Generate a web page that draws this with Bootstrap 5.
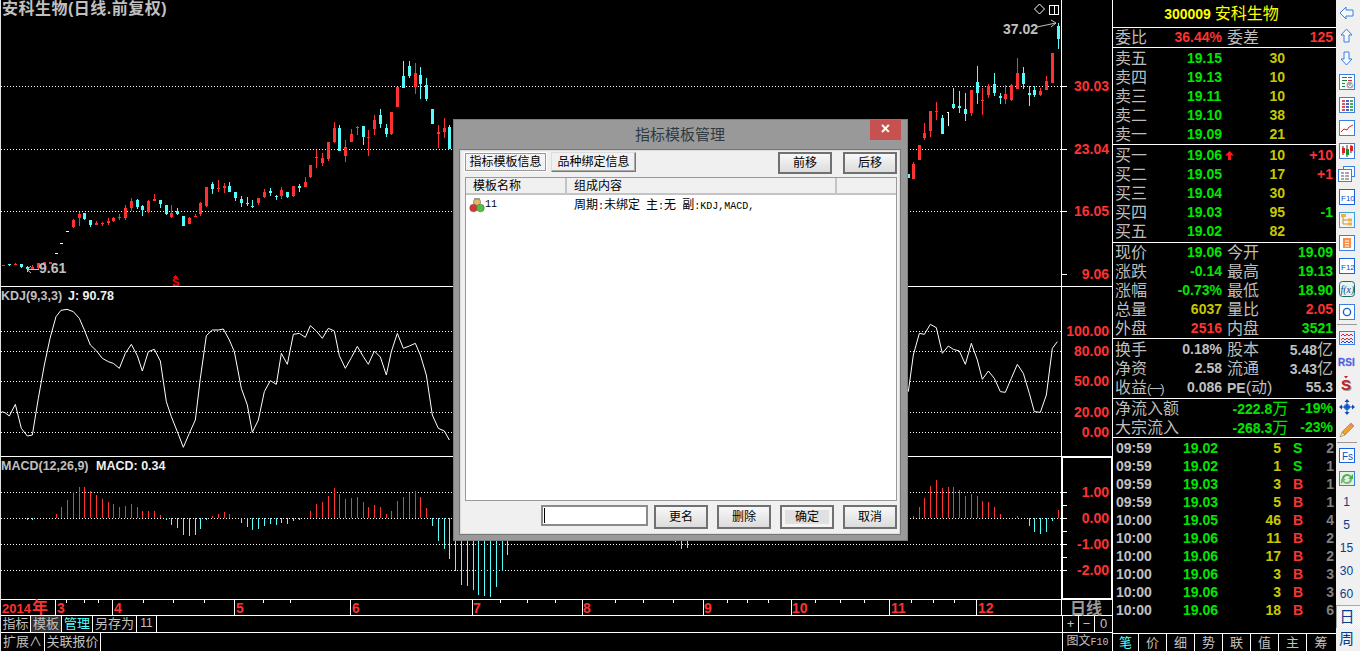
<!DOCTYPE html>
<html lang="zh">

<head>
  <meta charset="UTF-8">
  <meta name="viewport" content="width=device-width, initial-scale=1">
  <title>安科生物 日线</title>
  <link href="https://cdn.jsdelivr.net/npm/bootstrap@5.3.3/dist/css/bootstrap.min.css" rel="stylesheet">

  <style>
    body {
      background-color: #000;
      color: #c0c0c0;
      font-family: "Liberation Sans", "Noto Sans CJK SC", sans-serif;
      font-size: 14px;
      margin: 0;
      overflow: hidden;
    }
    .app-shell { width: 1360px; height: 651px; position: relative; overflow: hidden; }

    /* left chart column */
    .chart-col { width: 1113px; height: 651px; border-left: 1px solid #e0e0e0; border-right: 1px solid #fff; flex: none; }
    .chart-svg { display: block; width: 1111px; height: 616px; }
    .chart-svg text { font-family: "Liberation Sans", "Noto Sans CJK SC", sans-serif; }
    .btm-bar { border-bottom: 1px solid #fff; height: 17px; line-height: 15px; font-size: 13px; white-space: nowrap; }
    .btm-bar.last-bar { border-bottom: 0; height: 18px; line-height: 17px; }
    .btm-cell { border-right: 1px solid #fff; text-align: center; flex: none; height: 100%; }
    .bc-30 { width: 30px; }
    .bc-31 { width: 31px; }
    .bc-44 { width: 44px; }
    .bc-20 { width: 20px; font-size: 12px; }
    .bc-56 { width: 56px; }
    .bc-16 { width: 16px; font-size: 13px; }
    .bc-last { width: 17px; font-size: 13px; border-right: 0; }
    .axis-cells { margin-left: auto; width: 50px; border-left: 1px solid #fff; height: 100%; flex: none; }
    .btm-active { color: #54ffff; }
    .btm-grey { background-color: #333; }
    .f10-label { font-size: 12px; width: 50px; text-align: center; }
    .mono-part { font-family: "Liberation Mono", monospace; font-size: 10px; }

    /* quote panel */
    .quote-col { width: 223px; height: 651px; flex: none; overflow: hidden; }
    .q-head { height: 27px; line-height: 27px; padding-right: 6px; color: #ffff00; font-weight: 700; text-align: center; border-bottom: 1px solid #fff; box-sizing: content-box; }
    .q-head span { font-size: 16px; font-weight: 400; }
    .q-block { border-bottom: 1px solid #fff; box-sizing: content-box; }
    .book-sell { padding-top: 1px; }
    .book-buy { padding: 1px 0; }
    .block-extra { padding-top: 1px; padding-bottom: 1px; }
    .q-line { height: 19px; line-height: 19px; padding-left: 2px; padding-right: 3px; font-weight: 700; white-space: nowrap; display: flex; }
    .q-lab { font-size: 16px; font-weight: 400; color: #bdbdbd; flex: none; }
    .q-tiny { font-size: 13px; letter-spacing: -2px; }
    .q-pe { font-size: 14px; font-weight: 700; }
    .q-price { width: 50px; margin-left: 40px; flex: none; position: relative; }
    .q-vol { width: 48px; text-align: right; flex: none; }
    .q-diff { flex: 1; text-align: right; }
    .half-a { width: 107px; display: flex; justify-content: space-between; flex: none; }
    .half-b { flex: 1; margin-left: 5px; display: flex; justify-content: space-between; }
    .up-arrow { position: absolute; left: 38px; top: 5px; }
    .c-green { color: #00e600; }
    .c-red { color: #ff3232; }
    .c-vol { color: #c8c800; }
    .tick-line { height: 18px; line-height: 18px; padding-left: 3px; font-weight: 700; display: flex; white-space: nowrap; }
    .tk-time { width: 67px; flex: none; }
    .tk-price { width: 50px; flex: none; color: #00e600; }
    .tk-vol { width: 48px; text-align: right; color: #c8c800; flex: none; }
    .tk-side { width: 12px; margin-left: 12px; flex: none; }
    .tk-num { flex: 1; text-align: right; padding-right: 2px; color: #808080; }
    .tick-list { height: 194px; padding-top: 1px; border-bottom: 1px solid #fff; box-sizing: content-box; }
    .tab-cell { width: 28px; height: 18px; line-height: 17px; font-size: 13px; text-align: center; border-right: 1px solid #fff; flex: none; }
    .tab-cell.first-tab { width: 26px; color: #54ffff; }
    .tab-cell:last-child { border-right: 0; }

    /* right toolbar */
    .tool-col { width: 24px; height: 651px; background-color: #f0f0f0; flex: none; overflow: hidden; padding-top: 1px; }
    .tool-btn { height: 23px; display: flex; align-items: center; justify-content: center; color: #0a3c8c; font-size: 12px; flex: none; padding-right: 3px; }
    .tool-btn text { font-family: "Liberation Sans", sans-serif; }
    .tool-sep { height: 8px; display: flex; align-items: center; }
    .tool-sep::after { content: ""; display: block; width: 20px; margin-left: 1px; border-top: 1px solid #999; }
    .tool-pressed { background: repeating-conic-gradient(#fff 0 25%, #ececec 0 50%) 0 0 / 2px 2px; border-top: 1px solid #aaa; border-left: 1px solid #aaa; font-size: 15px; }
    .tool-wide { font-size: 15px; }
    .serif-text { font-family: "Liberation Serif", serif !important; }

    /* dialog */
    .tpl-dialog { position: absolute; left: 453px; top: 119px; width: 455px; height: 422px; background-color: #999; border: 1px solid #7d7d7d; padding: 0 6px 6px 5px; font-size: 12px; color: #000; }
    .dlg-title { height: 29px; position: relative; text-align: center; line-height: 29px; font-size: 15px; color: #2f3a40; }
    .dlg-close { position: absolute; right: 0; top: 0; width: 31px; height: 20px; background-color: #c75050; color: #fff; line-height: 18px; font-size: 16px; font-weight: 700; }
    .dlg-body { height: 386px; background-color: #f0f0f0; border: 1px solid #777; outline: 1px solid #ddd; outline-offset: -2px; padding: 2px 3px 0 5px; }
    .tab-btn { height: 20px; line-height: 16px; padding: 0; font-size: 12px; border-radius: 0; color: #000; background-color: #f0f0f0; }
    .tab-on { width: 83px; margin-left: -1px; border: 1px solid #fff; outline: 1px solid #999; outline-offset: -2px; background: repeating-conic-gradient(#fff 0 25%, #e8e8e8 0 50%) 0 0 / 2px 2px; }
    .tab-off { width: 85px; border: 1px solid #777; border-top-color: #ddd; border-left-color: #ddd; box-shadow: inset -1px -1px 0 #aaa; }
    .dlg-btn { width: 54px; height: 22px; line-height: 16px; padding: 0; font-size: 12px; border-radius: 0; color: #000; border: 2px solid #707070; background: linear-gradient(#f8f8f8, #dcdcdc); }
    .dlg-btn.tall-btn { height: 24px; }
    .dlg-btn.is-default { background: #e0e0e0; box-shadow: inset 0 0 0 3px #f4f4f4; }
    .dlg-btn:hover { background: linear-gradient(#f8f8f8, #dcdcdc); color: #000; border-color: #707070; }
    .gap-in { margin-left: 6px; }
    .gap-btn { margin-left: 9px; }
    .gap-top { margin-left: 11px; }
    .tpl-list { height: 324px; background-color: #fff; border: 1px solid #999; margin-top: 3px; }
    .tpl-head { height: 15px; line-height: 17px; background-color: #f0f0f0; border-bottom: 2px solid #c4c4c4; box-sizing: content-box; margin: 0; }
    .tpl-head > div { border-right: 2px solid #c4c4c4; padding-left: 7px; flex: none; height: 15px; }
    .th-name { width: 101px; }
    .th-parts { width: 270px; }
    .tpl-item { height: 18px; line-height: 18px; margin-top: 1px; }
    .item-name { width: 101px; flex: none; font-size: 10px; padding-left: 3px; font-family: "Liberation Mono", monospace; }
    .item-parts { padding-left: 7px; white-space: nowrap; }
    .dlg-input { width: 107px; height: 21px; border: 2px solid #8a8a8a; background-color: #fff; position: relative; }
    .dlg-input::after { content: ""; position: absolute; left: 1px; top: 1px; height: 15px; border-left: 1px solid #000; }
  </style>
</head>

<body>

<div class="app-shell d-flex">

  <!-- K线区 -->
  <div class="chart-col">
    <svg class="chart-svg" id="chart" viewBox="1 0 1111 616" shape-rendering="crispEdges"></svg>
    <div class="btm-bar d-flex">
      <div class="btm-cell bc-30">指标</div>
      <div class="btm-cell bc-31 btm-grey">模板</div>
      <div class="btm-cell bc-31 btm-active">管理</div>
      <div class="btm-cell bc-44">另存为</div>
      <div class="btm-cell bc-20">11</div>
      <div class="axis-cells d-flex">
        <div class="btm-cell bc-16">+</div>
        <div class="btm-cell bc-16">−</div>
        <div class="btm-cell bc-last">0</div>
      </div>
    </div>
    <div class="btm-bar last-bar d-flex">
      <div class="btm-cell bc-44">扩展∧</div>
      <div class="btm-cell bc-56">关联报价</div>
      <div class="axis-cells d-flex">
        <div class="f10-label">图文<span class="mono-part">F10</span></div>
      </div>
    </div>
  </div>

  <!-- 行情盘口 -->
  <div class="quote-col">
    <div class="q-head">300009 <span>安科生物</span></div>

    <div class="q-block">
      <div class="q-line">
        <div class="half-a"><span class="q-lab">委比</span><span class="c-red">36.44%</span></div>
        <div class="half-b"><span class="q-lab">委差</span><span class="c-red">125</span></div>
      </div>
    </div>

    <div class="q-block book-sell" id="sellBook"></div>
    <div class="q-block book-buy" id="buyBook"></div>

    <div class="q-block">
      <div class="q-line"><div class="half-a"><span class="q-lab">现价</span><span class="c-green">19.06</span></div><div class="half-b"><span class="q-lab">今开</span><span class="c-green">19.09</span></div></div>
      <div class="q-line"><div class="half-a"><span class="q-lab">涨跌</span><span class="c-green">-0.14</span></div><div class="half-b"><span class="q-lab">最高</span><span class="c-green">19.13</span></div></div>
      <div class="q-line"><div class="half-a"><span class="q-lab">涨幅</span><span class="c-green">-0.73%</span></div><div class="half-b"><span class="q-lab">最低</span><span class="c-green">18.90</span></div></div>
      <div class="q-line"><div class="half-a"><span class="q-lab">总量</span><span class="c-vol">6037</span></div><div class="half-b"><span class="q-lab">量比</span><span class="c-red">2.05</span></div></div>
      <div class="q-line"><div class="half-a"><span class="q-lab">外盘</span><span class="c-red">2516</span></div><div class="half-b"><span class="q-lab">内盘</span><span class="c-green">3521</span></div></div>
    </div>

    <div class="q-block block-extra">
      <div class="q-line"><div class="half-a"><span class="q-lab">换手</span><span>0.18%</span></div><div class="half-b"><span class="q-lab">股本</span><span>5.48<span class="q-lab">亿</span></span></div></div>
      <div class="q-line"><div class="half-a"><span class="q-lab">净资</span><span>2.58</span></div><div class="half-b"><span class="q-lab">流通</span><span>3.43<span class="q-lab">亿</span></span></div></div>
      <div class="q-line"><div class="half-a"><span class="q-lab">收益<span class="q-tiny">(一)</span></span><span>0.086</span></div><div class="half-b"><span class="q-lab"><span class="q-pe">PE</span>(动)</span><span>55.3</span></div></div>
    </div>

    <div class="q-block">
      <div class="q-line"><span class="q-lab">净流入额</span><span class="c-green ms-auto">-222.8<span class="q-lab c-green">万</span></span><span class="c-green ms-2 ps-1">-19%</span></div>
      <div class="q-line"><span class="q-lab">大宗流入</span><span class="c-green ms-auto">-268.3<span class="q-lab c-green">万</span></span><span class="c-green ms-2 ps-1">-23%</span></div>
    </div>

    <div class="tick-list" id="ticks"></div>

    <div class="d-flex">
      <div class="tab-cell first-tab">笔</div>
      <div class="tab-cell">价</div>
      <div class="tab-cell">细</div>
      <div class="tab-cell">势</div>
      <div class="tab-cell">联</div>
      <div class="tab-cell">值</div>
      <div class="tab-cell">主</div>
      <div class="tab-cell">筹</div>
    </div>
  </div>

  <!-- 右侧工具条 -->
  <div class="tool-col d-flex flex-column">
    <div class="tool-btn"><svg width="15" height="14" viewBox="0 0 15 14"><path d="M1 7 7 1V4H14V10H7V13Z" fill="#f4f8ff" stroke="#3c7fe0"/></svg></div>
    <div class="tool-btn"><svg width="13" height="15" viewBox="0 0 13 15"><path d="M6.500 1 12 7H9V14H4V7H1Z" fill="#f4f8ff" stroke="#3c7fe0"/></svg></div>
    <div class="tool-btn"><svg width="13" height="15" viewBox="0 0 13 15"><path d="M6.500 14 12 8H9V1H4V8H1Z" fill="#f4f8ff" stroke="#3c7fe0"/></svg></div>
    <div class="tool-btn"><svg width="16" height="16" viewBox="0 0 16 16"><rect x=".5" y=".5" width="15" height="15" fill="#fff" stroke="#3c7fe0"/><path d="M3 3.500H8M3 6.500H8M3 9.500H6M3 12.500H6" stroke="#0a8c3c"/><path d="M9 3.500H13M9 6.500H13" stroke="#d03030"/><circle cx="11" cy="11" r="3.500" fill="#aaa"/><path d="M9 11l2 2 3-4" stroke="#fff" fill="none"/></svg></div>
    <div class="tool-btn"><svg width="16" height="16" viewBox="0 0 16 16"><rect x=".5" y=".5" width="15" height="15" fill="#fff" stroke="#3c7fe0"/><path d="M3 4H6M3 7H6M3 10H6M3 13H6" stroke="#d02020" stroke-width="1.500"/><path d="M7 4H10M7 7H10M7 10H10M7 13H10" stroke="#1030c0" stroke-width="1.500"/><path d="M11 4H14M11 7H14M11 10H14M11 13H14" stroke="#109030" stroke-width="1.500"/></svg></div>
    <div class="tool-btn"><svg width="16" height="16" viewBox="0 0 16 16"><rect x=".5" y=".5" width="15" height="15" fill="#fff" stroke="#3c7fe0"/><path d="M2 12 5 9 8 10 10 7 14 5" stroke="#e02020" fill="none"/></svg></div>
    <div class="tool-btn"><svg width="16" height="16" viewBox="0 0 16 16"><rect x=".5" y=".5" width="15" height="15" fill="#fff" stroke="#3c7fe0"/><path d="M4 3V12M8 2V14M12 2V10" stroke="#333"/><rect x="3" y="5" width="3" height="5" fill="#e02020"/><rect x="7" y="6" width="3" height="6" fill="#109030"/><rect x="11" y="3" width="3" height="5" fill="#e02020"/></svg></div>
    <div class="tool-btn"><svg width="17" height="16" viewBox="0 0 17 16"><rect x="5.500" y=".5" width="11" height="10" fill="#f4f8ff" stroke="#3c7fe0"/><rect x=".5" y="3.500" width="13" height="12" fill="#fff" stroke="#3c7fe0"/><path d="M3 7H6M7 7H11M3 10H6M7 10H11M3 13H6M7 13H11" stroke="#555"/></svg></div>
    <div class="tool-btn"><svg width="16" height="16" viewBox="0 0 16 16"><rect x=".5" y=".5" width="15" height="15" fill="#fff" stroke="#1a62e0"/><text x="2" y="11.500" font-size="8" fill="#0a50c8">F10</text></svg></div>
    <div class="tool-btn"><svg width="16" height="16" viewBox="0 0 16 16"><rect x=".5" y=".5" width="15" height="15" fill="#eef6ff" stroke="#3c9fe0"/><path d="M4 4V12H9M4 8H9" stroke="#d09020" fill="none"/><rect x="2" y="2" width="5" height="3" fill="#f0b040"/><rect x="9" y="6.500" width="4" height="3" fill="#f0b040"/><rect x="9" y="10.500" width="4" height="3" fill="#f0b040"/></svg></div>
    <div class="tool-btn"><svg width="16" height="16" viewBox="0 0 16 16"><rect x=".5" y=".5" width="15" height="15" fill="#fff" stroke="#3c7fe0"/><rect x="4" y="3" width="8" height="10" fill="#f59050"/><path d="M6 2.500H10M6 6H10M6 8.500H10M6 11H10" stroke="#fff"/></svg></div>
    <div class="tool-btn"><svg width="16" height="16" viewBox="0 0 16 16"><rect x=".5" y=".5" width="15" height="15" fill="#fff" stroke="#1a62e0"/><text x="2" y="11.500" font-size="8" fill="#0a50c8">F12</text></svg></div>
    <div class="tool-btn"><svg width="16" height="16" viewBox="0 0 16 16"><rect x=".5" y=".5" width="15" height="15" rx="3" fill="#e4f6f0" stroke="#1a6a6a"/><text class="serif-text" x="1.500" y="12" font-size="10" font-style="italic" fill="#0a3c8c">f(x)</text></svg></div>
    <div class="tool-btn"><svg width="16" height="16" viewBox="0 0 16 16"><rect x=".5" y=".5" width="15" height="15" fill="#fff" stroke="#3c7fe0"/><circle cx="8" cy="8" r="3.600" fill="none" stroke="#1a62c0" stroke-width="1.400"/></svg></div>
    <div class="tool-sep"></div>
    <div class="tool-btn"><svg width="16" height="14" viewBox="0 0 16 14"><rect x=".5" y=".5" width="15" height="13" fill="#e8f0ff" stroke="#3c7fe0"/><path d="M2 5 4 3 6 5 8 3 10 5 12 3 14 5M2 9 4 7 6 9 8 7 10 9 12 7 14 9" stroke="#e02020" fill="none"/><path d="M2 12 4 10 6 12 8 10 10 12 12 10 14 12" stroke="#2040d0" fill="none"/></svg></div>
    <div class="tool-btn"><svg width="18" height="14" viewBox="0 0 18 14"><text x="0" y="12" font-size="10" font-weight="700" fill="#4050d8" stroke="#8090e8" stroke-width=".3">RSI</text></svg></div>
    <div class="tool-btn"><svg width="14" height="18" viewBox="0 0 14 18"><text x="2" y="16" font-size="15" font-weight="700" fill="#999">S</text><text x="1" y="15" font-size="15" font-weight="700" fill="#c02020">S</text><path d="M6 3.500 4 1h4z" fill="#c02020"/></svg></div>
    <div class="tool-btn"><svg width="16" height="16" viewBox="0 0 16 16"><path d="M8 0 10.500 3H5.500ZM8 16 5.500 13H10.500ZM0 8 3 5.500V10.500ZM16 8 13 10.500V5.500Z" fill="#0a4cb0"/><circle cx="8" cy="8" r="3" fill="#2a70d8"/><path d="M8 3V13M3 8H13" stroke="#0a4cb0"/></svg></div>
    <div class="tool-btn"><svg width="16" height="16" viewBox="0 0 16 16"><path d="M3 10 12 1 15 4 6 13Z" fill="#f0a030" stroke="#b06a10" stroke-width=".6"/><path d="M3 10 1 15 6 13Z" fill="#f6dcb0" stroke="#806030" stroke-width=".5"/><path d="M12 1 15 4 13.500 5.500 10.500 2.500Z" fill="#d88"/></svg></div>
    <div class="tool-sep"></div>
    <div class="tool-btn"><svg width="16" height="15" viewBox="0 0 16 15"><rect x=".5" y=".5" width="15" height="14" fill="#fff" stroke="#1a62e0"/><text x="3" y="11.500" font-size="10" fill="#0a50c8">Fs</text></svg></div>
    <div class="tool-btn"><svg width="16" height="15" viewBox="0 0 16 15"><rect x=".5" y=".5" width="15" height="14" fill="#e4f0e4" stroke="#3c7fe0"/><path d="M3 8A5 5 0 0 1 12 5L14 3V8H9L11 6A3.500 3.500 0 0 0 5 8Z" fill="#50b050"/><path d="M13 8A5 5 0 0 1 4 11L2 13V8H7L5 10A3.500 3.500 0 0 0 11 8Z" fill="#70c070"/></svg></div>
    <div class="tool-btn">1</div>
    <div class="tool-btn">5</div>
    <div class="tool-btn">15</div>
    <div class="tool-btn">30</div>
    <div class="tool-btn">60</div>
    <div class="tool-btn tool-pressed">日</div>
    <div class="tool-btn tool-wide">周</div>
  </div>

  <!-- 指标模板管理 对话框 -->
  <div class="tpl-dialog">
    <div class="dlg-title">指标模板管理<div class="dlg-close">×</div></div>
    <div class="dlg-body">
      <div class="d-flex align-items-start">
        <button type="button" class="btn tab-btn tab-on">指标模板信息</button>
        <button type="button" class="btn tab-btn tab-off ms-1">品种绑定信息</button>
        <button type="button" class="btn dlg-btn ms-auto">前移</button>
        <button type="button" class="btn dlg-btn gap-top">后移</button>
      </div>
      <div class="tpl-list">
        <div class="tpl-head d-flex">
          <div class="th-name">模板名称</div>
          <div class="th-parts">组成内容</div>
        </div>
        <div class="tpl-item d-flex">
          <div class="item-name d-flex align-items-center">
            <svg width="16" height="16" viewBox="0 0 16 16"><circle cx="8" cy="5" r="3.600" fill="#e8b860" stroke="#666" stroke-width=".6"/><rect x="5" y="1" width="6" height="2" fill="#999"/><circle cx="4.500" cy="11" r="3.800" fill="#e03030" stroke="#666" stroke-width=".6"/><circle cx="11.500" cy="11" r="3.800" fill="#50c040" stroke="#666" stroke-width=".6"/></svg>
            <span>11</span>
          </div>
          <div class="item-parts">周期<span class="mono-part">:</span>未绑定<span class="mono-part"> </span>主<span class="mono-part">:</span>无<span class="mono-part"> </span>副<span class="mono-part">:KDJ,MACD,</span></div>
        </div>
      </div>
      <div class="d-flex align-items-start mt-1">
        <div class="dlg-input ms-auto"></div>
        <button type="button" class="btn dlg-btn tall-btn gap-in">更名</button>
        <button type="button" class="btn dlg-btn tall-btn gap-btn">删除</button>
        <button type="button" class="btn dlg-btn tall-btn is-default gap-btn">确定</button>
        <button type="button" class="btn dlg-btn tall-btn gap-btn">取消</button>
      </div>
    </div>
  </div>

</div>

<script>
  // 五档盘口
  const sell = [["卖五","19.15",30],["卖四","19.13",10],["卖三","19.11",10],["卖二","19.10",38],["卖一","19.09",21]];
  const buy = [["买一","19.06",10,"+10","c-red",true],["买二","19.05",17,"+1","c-red"],["买三","19.04",30,""],["买四","19.03",95,"-1","c-green"],["买五","19.02",82,""]];
  const arrow = '<svg class="up-arrow" width="9" height="9" viewBox="0 0 9 9"><path d="M4.500 0 9 4.500H6V9H3V4.500H0Z" fill="#ff1a1a"/></svg>';
  const bookRow = r => `<div class="q-line"><span class="q-lab">${r[0]}</span><span class="q-price c-green">${r[1]}${r[5] ? arrow : ''}</span><span class="q-vol c-vol">${r[2]}</span><span class="q-diff ${r[4] || ''}">${r[3] || ''}</span></div>`;
  document.getElementById("sellBook").innerHTML = sell.map(bookRow).join("");
  document.getElementById("buyBook").innerHTML = buy.map(bookRow).join("");

  // 分笔
  const ticks = [["09:59","19.02",5,"S",2],["09:59","19.02",1,"S",1],["09:59","19.03",3,"B",1],["09:59","19.03",5,"B",1],["10:00","19.05",46,"B",4],["10:00","19.06",11,"B",2],["10:00","19.06",17,"B",2],["10:00","19.06",3,"B",3],["10:00","19.06",3,"B",3],["10:00","19.06",18,"B",6]];
  document.getElementById("ticks").innerHTML = ticks.map(t => `<div class="tick-line"><span class="tk-time">${t[0]}</span><span class="tk-price">${t[1]}</span><span class="tk-vol">${t[2]}</span><span class="tk-side ${t[3] == "S" ? "c-green" : "c-red"}">${t[3]}</span><span class="tk-num">${t[4]}</span></div>`).join("");

  // 图表
  const RED = "#ff3232", CYAN = "#54fcfc", WHITE = "#fff", GREY = "#c0c0c0";
  let svg = "";
  const rect = (x, y, w, h, c) => { svg += `<rect x="${x}" y="${y}" width="${w}" height="${h}" fill="${c}"/>`; };
  const dots = y => { svg += `<line x1="1" x2="1061" y1="${y + .5}" y2="${y + .5}" stroke="#fff" stroke-dasharray="1 2"/>`; };
  const label = (x, y, s, c, size, extra) => { svg += `<text x="${x}" y="${y}" fill="${c}" font-size="${size}" font-weight="700" shape-rendering="auto" ${extra || ""}>${s}</text>`; };

  // 横向虚线
  [86, 149, 211, 331, 351, 381, 412, 432, 492, 518, 544, 570].forEach(dots);

  // K线 [x, 上影, 实体上, 实体下, 下影, 颜色] 坐标为放大3倍的值
  const R = RED, C = CYAN;
  const leftBars = [[10,794,794,797,797,R],[28,793,793,796,799,C],[46,790,792,795,795,R],[64,792,792,801,804,C],[82,798,802,808,816,C],[97,796,802,808,810,R],[115,790,790,804,806,R],[133,786,787,795,795,R],[150,786,787,792,792,R],[168,760,760,763,763,WHITE],[183,730,730,733,733,WHITE],[201,694,694,697,697,WHITE],[220,657,660,682,684,R],[238,635,642,654,678,R],[253,639,640,658,660,C],[271,660,660,675,681,C],[289,663,669,675,675,R],[307,665,669,673,678,R],[325,655,663,670,675,R],[340,650,653,663,665,R],[358,642,650,654,660,R],[376,615,625,655,660,R],[394,595,603,625,632,R],[412,597,600,622,627,C],[427,615,617,630,648,C],[445,600,603,635,640,R],[463,582,597,603,603,R],[481,600,600,612,625,C],[499,615,615,642,645,C],[514,615,640,652,654,R],[532,625,633,642,645,C],[550,648,648,678,678,C],[568,652,654,671,671,R],[586,642,647,650,650,R],[601,606,608,642,648,R],[619,561,561,618,621,R],[637,547,552,567,582,C],[655,540,564,567,576,R],[673,549,558,564,579,R],[688,546,558,576,576,C],[706,576,576,595,603,C],[724,588,597,609,621,C],[742,591,609,612,618,C],[757,600,618,621,624,C],[775,594,594,609,615,R],[793,567,576,591,594,R],[811,564,573,579,588,C],[829,585,588,591,600,C],[844,561,570,588,597,R],[862,576,576,591,594,C],[880,558,558,588,591,R],[898,552,558,564,576,C],[916,531,546,561,561,R],[931,495,495,531,534,R],[949,450,471,474,504,R],[967,459,474,489,498,R],[985,426,426,477,483,R],[1003,366,384,426,429,R],[1018,375,384,453,453,C],[1036,420,441,468,486,R],[1054,387,402,426,426,R],[1072,378,382,384,405,R],[1090,378,378,411,435,C],[1105,390,411,414,468,R],[1123,345,360,387,405,R],[1141,327,345,372,384,C],[1159,372,384,402,411,C],[1174,336,336,402,405,R],[1192,261,261,321,321,R],[1210,183,228,264,264,C],[1228,183,198,228,234,C],[1246,189,219,261,282,R],[1261,201,225,252,297,C],[1279,234,255,297,303,C],[1297,327,327,372,372,C],[1315,375,396,402,444,R],[1333,354,384,396,414,R],[1348,375,381,447,447,C]];
  const rightBars = [[26,522,522,534,534,C],[40,486,492,537,537,R],[58,435,435,480,480,R],[73,369,399,414,420,R],[91,333,333,393,411,R],[109,306,333,336,360,R],[127,345,354,402,402,C],[160,264,312,325,327,C],[178,273,318,324,339,C],[196,279,327,342,363,C],[214,270,270,339,348,R],[232,198,246,279,312,C],[247,264,300,303,345,R],[265,252,258,285,294,R],[283,219,252,279,288,C],[301,279,288,294,312,C],[316,255,282,297,312,R],[334,252,255,300,303,R],[352,174,219,267,267,R],[370,201,219,252,267,C],[388,258,279,285,318,C],[403,258,270,285,291,C],[421,264,273,285,288,R],[439,228,243,270,270,R],[457,159,159,249,249,R],[475,69,78,117,147,C]];
  const drawBar = (b, ox, oy) => {
    const x = ox + Math.floor(b[0] / 3), y = v => oy + Math.round(v / 3);
    rect(x, y(b[1]), 1, Math.max(y(b[4]) - y(b[1]), 1), b[5]);
    rect(x - 1, y(b[2]), 3, Math.max(y(b[3]) - y(b[2]), 1), b[5]);
  };
  leftBars.forEach(b => drawBar(b, 0, 0));
  rightBars.forEach(b => drawBar(b, 900, 0));
  // 白色十字星
  rect(948, 112, 1, 14, WHITE); rect(947, 112, 2, 1, WHITE);

  // KDJ 折线
  const kdjL = [5,380,15,383,28,393,46,358,64,430,82,453,97,450,115,340,133,240,150,160,168,95,183,76,201,73,220,80,238,100,253,135,271,180,289,197,307,220,325,230,340,235,358,250,376,205,394,178,412,212,427,258,445,200,463,193,481,228,499,350,514,395,532,440,550,487,568,445,586,405,601,280,619,152,637,135,655,135,670,132,688,165,703,200,724,310,742,360,757,442,775,405,793,320,811,287,829,298,844,205,862,238,880,148,898,145,916,157,931,122,949,138,967,160,985,130,1003,138,1018,212,1036,250,1054,218,1072,184,1090,215,1105,238,1123,198,1141,216,1159,270,1174,200,1192,145,1210,190,1228,183,1246,175,1261,210,1279,270,1297,390,1315,430,1333,438,1348,465];
  const kdjR = [25,320,40,210,58,145,73,148,91,118,109,128,127,205,145,183,160,193,178,198,196,238,214,175,232,225,247,283,265,258,283,280,301,320,316,322,334,280,352,238,370,265,388,325,403,380,421,382,439,330,457,190,472,170];
  const poly = (a, ox) => {
    let p = [];
    for (let i = 0; i < a.length; i += 2) p.push((ox + a[i] / 3) + "," + (285 + a[i + 1] / 3));
    svg += `<polyline points="${p.join(" ")}" fill="none" stroke="#fff" shape-rendering="auto"/>`;
  };
  poly(kdjL, 0); poly(kdjR, 900);

  // MACD 柱
  const macdL = [[82,704],[97,705],[169,686],[184,666],[202,645],[220,622],[238,606],[253,606],[271,618],[289,630],[307,642],[325,651],[340,657],[358,666],[376,663],[394,657],[412,666],[427,678],[445,678],[463,678],[481,690],[499,705],[514,720],[532,729],[550,750],[568,753],[586,750],[601,732],[619,705],[637,693],[655,687],[673,681],[688,687],[724,714],[742,726],[757,735],[775,732],[793,723],[811,717],[829,720],[844,714],[862,717],[880,708],[898,705],[931,678],[949,657],[967,651],[985,633],[1003,609],[1018,627],[1036,642],[1054,639],[1072,636],[1090,651],[1105,666],[1123,660],[1141,666],[1159,687],[1174,678],[1192,648],[1210,636],[1228,624],[1246,618],[1261,636],[1279,669],[1297,723],[1315,768],[1333,792],[1348,822]];
  const macdR = [[40,693],[58,666],[73,639],[91,603],[109,585],[127,609],[145,606],[160,606],[178,615],[196,633],[214,627],[232,633],[247,648],[265,651],[283,666],[301,687],[352,693],[388,723],[403,741],[421,747],[439,741],[457,708],[475,675]];
  const macdBar = (m, ox) => {
    const x = ox + Math.floor(m[0] / 3), top = 285 + Math.round(m[1] / 3);
    if (top < 518) rect(x, top, 1, 518 - top, RED); else rect(x, 518, 1, top - 518, CYAN);
  };
  macdL.forEach(m => macdBar(m, 0));
  macdR.forEach(m => macdBar(m, 900));
  // 对话框下方露出的绿柱 [x, 下端y]
  [[455,571],[461,585],[467,586],[473,590],[478,595],[484,596],[490,597],[496,587],[502,571],[507,555],[675,542],[681,549],[687,548]].forEach(b => rect(b[0], 518, 1, b[1] - 518, CYAN));

  // 分割线
  rect(1, 286, 1061, 1, WHITE);
  rect(1, 456, 1111, 1, WHITE);
  rect(1, 599, 1111, 1, WHITE);
  rect(1061, 0, 1, 616, WHITE);
  rect(1062, 286, 50, 1, WHITE);
  rect(1, 615, 1111, 1, WHITE);
  // MACD 坐标框
  rect(1062, 457, 50, 1, WHITE); rect(1062, 457, 1, 142, WHITE); rect(1111, 457, 1, 142, WHITE); rect(1062, 598, 50, 1, WHITE);

  // 坐标刻度
  [86, 149, 211, 274].forEach(y => rect(1062, y, 5, 1, WHITE));
  [492, 505, 518, 531, 544, 557, 570].forEach(y => rect(1062, y, 5, 1, WHITE));

  const axisText = (y, s) => label(1109, y + 5, s, RED, 14, 'text-anchor="end"');
  [[86,"30.03"],[149,"23.04"],[211,"16.05"],[274,"9.06"],[331,"100.00"],[351,"80.00"],[381,"50.00"],[412,"20.00"],[432,"0.00"],[492,"1.00"],[518,"0.00"],[544,"-1.00"],[570,"-2.00"]].forEach(a => axisText(a[0], a[1]));

  // 标题和指标名
  label(2, 14, "安科生物(日线.前复权)", GREY, 16, 'letter-spacing=".5"');
  label(1, 300, "KDJ(9,3,3)", GREY, 12.5);
  label(68, 300, "J: 90.78", "#f0f0f0", 12.5);
  label(1, 470, "MACD(12,26,9)", GREY, 12.5);
  label(96, 470, "MACD: 0.34", "#f0f0f0", 12.5);

  // 最高最低标记
  label(39, 273, "9.61", GREY, 14);
  label(1003, 34, "37.02", GREY, 14);
  svg += `<path d="M39 269.500H28M31 266 27 269.500 31 273M1037 27 1056 23M1051 20 1056 23 1051 27" fill="none" stroke="#c0c0c0" shape-rendering="auto"/>`;
  svg += `<path d="M175.500 275 178 278H173Z" fill="#ff0000"/>`;
  label(172, 286, "S", "#ff0000", 11);
  rect(173, 285, 6, 1, "#ff0000");

  // 右上角小图标
  svg += `<path d="M1039.500 4 1044.500 9 1039.500 14 1034.500 9Z" fill="none" stroke="#fff" shape-rendering="auto"/><rect x="1049.500" y="5.500" width="9" height="9" fill="none" stroke="#fff"/><path d="M1054.500 5V15" stroke="#fff"/>`;

  // 日期轴
  [55,112,234,350,472,582,703,791,889,976].forEach(x => rect(x, 600, 1, 15, WHITE));
  [66,84,98,143,173,204,263,290,500,527,555,615,643,673,727,747,768,815,840,864,911,933,954].forEach(x => rect(x, 600, 1, 3, WHITE));
  label(2, 613, "2014", RED, 13);
  label(32, 613, "年", RED, 16, 'font-weight="400"');
  [[57,"3"],[114,"4"],[236,"5"],[352,"6"],[473,"7"],[583,"8"],[704,"9"],[792,"10"],[891,"11"],[978,"12"]].forEach(d => label(d[0], 613, d[1], RED, 14));
  label(1070, 614, "日线", "#9a9a9a", 16);

  document.getElementById("chart").innerHTML = svg;
</script>

<script src="https://cdn.jsdelivr.net/npm/bootstrap@5.3.3/dist/js/bootstrap.bundle.min.js"></script>
</body>
</html>
